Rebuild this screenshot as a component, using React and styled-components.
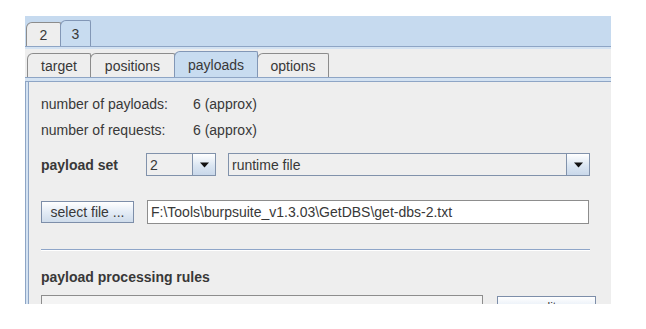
import React from "react";
import styled, { createGlobalStyle, css } from "styled-components";

const GlobalStyle = createGlobalStyle`
	body {
		margin: 0;
		background: #ffffff;
	}
`;

const blueLine = "#8ea5c5";
const blueLight = "#d3e2f2";

const Window = styled.div`
	margin: 16px 0 0 25px;
	width: 586px;
	height: 288px;
	background: #eeeeee;
	overflow: hidden;
	font-family: "Liberation Sans", Arial, sans-serif;
	font-size: 14px;
	color: #383838;
`;

const OuterBar = styled.div`
	display: flex;
	align-items: flex-end;
	height: 30px;
	padding-left: 1px;
	background: #c6daef;
	border-bottom: 1px solid ${blueLine};
`;

const OuterStrip = styled.div`
	height: 2px;
	background: ${blueLight};
`;

const Tab = styled.div`
	box-sizing: border-box;
	display: flex;
	align-items: center;
	justify-content: center;
	width: ${(props) => props.width}px;
	height: ${(props) => (props.selected ? 26 : 24)}px;
	margin-right: -1px;
	border: 1px solid #8c8c8c;
	border-bottom: none;
	border-radius: 6px 2px 0 0;
	background: #eeeeee;
	color: #383838;

	${(props) =>
		props.selected &&
		css`
			position: relative;
			z-index: 1;
			background: #c8dcf0;
			border-color: #8297b6;
		`}
`;

const InnerBar = styled.div`
	display: flex;
	align-items: flex-end;
	height: 28px;
	padding-left: 2px;
`;

const ContentStrip = styled.div`
	height: 3px;
	background: ${blueLight};
	border-top: 1px solid ${blueLine};
	border-bottom: 1px solid ${blueLine};
`;

const Panel = styled.div`
	height: 230px;
	padding: 9px 0 0 16px;
	box-shadow: inset 1px 0 0 ${blueLine}, inset 3px 0 0 ${blueLight},
		inset 4px 0 0 ${blueLine};
`;

const InfoGrid = styled.div`
	display: grid;
	grid-template-columns: 152px auto;
	grid-auto-rows: 26px;
	align-items: center;
	line-height: 16px;
`;

const Row = styled.div`
	display: flex;
	align-items: center;
	height: ${(props) => props.height}px;
	margin-top: ${(props) => props.top}px;
`;

const BoldLabel = styled.div`
	width: ${(props) => props.width || "auto"}px;
	font-weight: bold;
	line-height: 16px;
`;

const Combo = styled.div`
	box-sizing: border-box;
	display: flex;
	width: ${(props) => props.width}px;
	height: 23px;
	margin-right: 12px;
	border: 1px solid #8192ab;
	background: #efefef;
`;

const ComboText = styled.div`
	flex: 1;
	display: flex;
	align-items: center;
	padding-left: 3px;
`;

const ComboButton = styled.div`
	box-sizing: border-box;
	display: flex;
	align-items: center;
	justify-content: center;
	width: 23px;
	border-left: 1px solid #8192ab;
	background: linear-gradient(#ffffff, #dbe6f2 55%, #c9d8ea);
`;

const Arrow = () => (
	<svg width="9" height="6" viewBox="0 0 9 6">
		<polygon points="0,0.5 9,0.5 4.5,5.5" fill="#111111" />
	</svg>
);

const Button = styled.div`
	box-sizing: border-box;
	display: flex;
	align-items: center;
	justify-content: center;
	width: ${(props) => props.width}px;
	height: ${(props) => props.height || 22}px;
	margin-right: ${(props) => props.gap || 0}px;
	border: 1px solid #7d8ea9;
	background: linear-gradient(#ffffff, #e4ecf6 50%, #cfdceb);
`;

const TextField = styled.div`
	box-sizing: border-box;
	display: flex;
	align-items: center;
	width: ${(props) => props.width}px;
	height: 24px;
	padding-left: 3px;
	border: 1px solid #8d8d8d;
	background: #ffffff;
	white-space: nowrap;
`;

const Separator = styled.div`
	width: 549px;
	height: 1px;
	margin-top: 25px;
	background: #8ea5c8;
	box-shadow: 0 1px 0 #ffffff;
`;

const Heading = styled(BoldLabel)`
	margin-top: 19px;
`;

const ListBox = styled.div`
	box-sizing: border-box;
	width: 442px;
	height: 40px;
	margin-right: 14px;
	border: 1px solid #8d8d8d;
	background: #f4f4f4;
`;

const BottomRow = styled.div`
	display: flex;
	align-items: flex-start;
	margin-top: 10px;
`;

const EditButton = styled(Button)`
	margin-top: 1px;
	align-items: flex-start;
	padding-top: 3px;
	font-size: 12px;
`;

const App = () => {
	return (
		<>
			<GlobalStyle />
			<Window>
				<OuterBar>
					<Tab width={35}>2</Tab>
					<Tab width={31} selected>
						3
					</Tab>
				</OuterBar>
				<OuterStrip />
				<InnerBar>
					<Tab width={64}>target</Tab>
					<Tab width={85}>positions</Tab>
					<Tab width={84} selected>
						payloads
					</Tab>
					<Tab width={72}>options</Tab>
				</InnerBar>
				<ContentStrip />
				<Panel>
					<InfoGrid>
						<div>number of payloads:</div>
						<div>6 (approx)</div>
						<div>number of requests:</div>
						<div>6 (approx)</div>
					</InfoGrid>

					<Row top={10} height={23}>
						<BoldLabel width={105}>payload set</BoldLabel>
						<Combo width={70}>
							<ComboText>2</ComboText>
							<ComboButton>
								<Arrow />
							</ComboButton>
						</Combo>
						<Combo width={362}>
							<ComboText>runtime file</ComboText>
							<ComboButton>
								<Arrow />
							</ComboButton>
						</Combo>
					</Row>

					<Row top={24} height={24}>
						<Button width={93} gap={13}>
							select file ...
						</Button>
						<TextField width={442}>
							F:\Tools\burpsuite_v1.3.03\GetDBS\get-dbs-2.txt
						</TextField>
					</Row>

					<Separator />

					<Heading>payload processing rules</Heading>

					<BottomRow>
						<ListBox />
						<EditButton width={99} height={24}>
							edit
						</EditButton>
					</BottomRow>
				</Panel>
			</Window>
		</>
	);
};

export default App;
